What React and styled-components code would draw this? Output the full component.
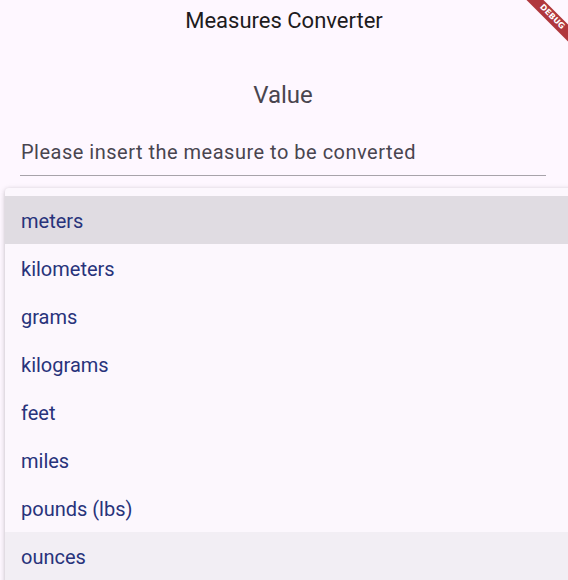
import React from 'react';
import styled, { createGlobalStyle } from 'styled-components';

const GlobalStyle = createGlobalStyle`
    html, body {
        margin: 0;
        padding: 0;
        background: #fef7ff;
        font-family: Roboto, "Liberation Sans", sans-serif;
    }
`;

const units = ['meters', 'kilometers', 'grams', 'kilograms', 'feet', 'miles', 'pounds (lbs)', 'ounces'];

export default function App() {
    return (
        <>
            <GlobalStyle />
            <Page>
                <Header>Measures Converter</Header>
                <Body>
                    <Label>Value</Label>
                    <Field>
                        <Hint>Please insert the measure to be converted</Hint>
                    </Field>
                </Body>
                <Menu>
                    {units.map((unit, i) => (
                        <MenuItem key={unit} state={i === 0 ? 'selected' : i === units.length - 1 ? 'hover' : 'none'}>
                            {unit}
                        </MenuItem>
                    ))}
                </Menu>
                <DebugBanner><span>DEBUG</span></DebugBanner>
            </Page>
        </>
    );
}

const Page = styled.div`
    position: relative;
    width: 568px;
    height: 580px;
    overflow: hidden;
    background: #fef7ff;
`;

const Header = styled.div`
    height: 40px;
    display: flex;
    align-items: center;
    justify-content: center;
    font-size: 22px;
    color: #1d1b20;
`;

const Body = styled.div`
    display: flex;
    flex-direction: column;
    padding: 0 22px 0 20px;
`;

const Label = styled.div`
    margin-top: 40px;
    text-align: center;
    font-size: 24px;
    line-height: 30px;
    color: #49454f;
`;

const Field = styled.div`
    margin-top: 26px;
    height: 40px;
    box-sizing: border-box;
    padding-top: 4px;
    display: flex;
    align-items: flex-start;
    border-bottom: 1px solid #a7a3aa;
`;

const Hint = styled.div`
    font-size: 20px;
    line-height: 24px;
    letter-spacing: 0.5px;
    color: #49454f;
    padding-left: 1px;
`;

const Menu = styled.div`
    position: absolute;
    left: 5px;
    right: -10px;
    top: 188px;
    bottom: -20px;
    padding-top: 8px;
    background: #fcf7fd;
    box-shadow: 0 1px 4px rgba(0, 0, 0, 0.18), 0 2px 8px rgba(0, 0, 0, 0.08);
    border-radius: 4px;
`;

const MenuItem = styled.div`
    height: 48px;
    box-sizing: border-box;
    padding-top: 2px;
    display: flex;
    align-items: center;
    padding-left: 16px;
    font-size: 20px;
    color: #28337b;
    background: ${p => p.state === 'selected' ? '#e0dce2' : p.state === 'hover' ? '#f2eef4' : 'transparent'};
`;

const DebugBanner = styled.div`
    position: absolute;
    top: 0;
    right: 0;
    width: 60px;
    height: 60px;
    overflow: hidden;

    span {
        position: absolute;
        top: 11px;
        right: -24px;
        width: 80px;
        height: 12px;
        transform: rotate(45deg);
        background: #b0373d;
        color: #fff;
        font-family: "DejaVu Sans", sans-serif;
        font-weight: 700;
        font-size: 8px;
        line-height: 12px;
        text-align: center;
    }
`;
